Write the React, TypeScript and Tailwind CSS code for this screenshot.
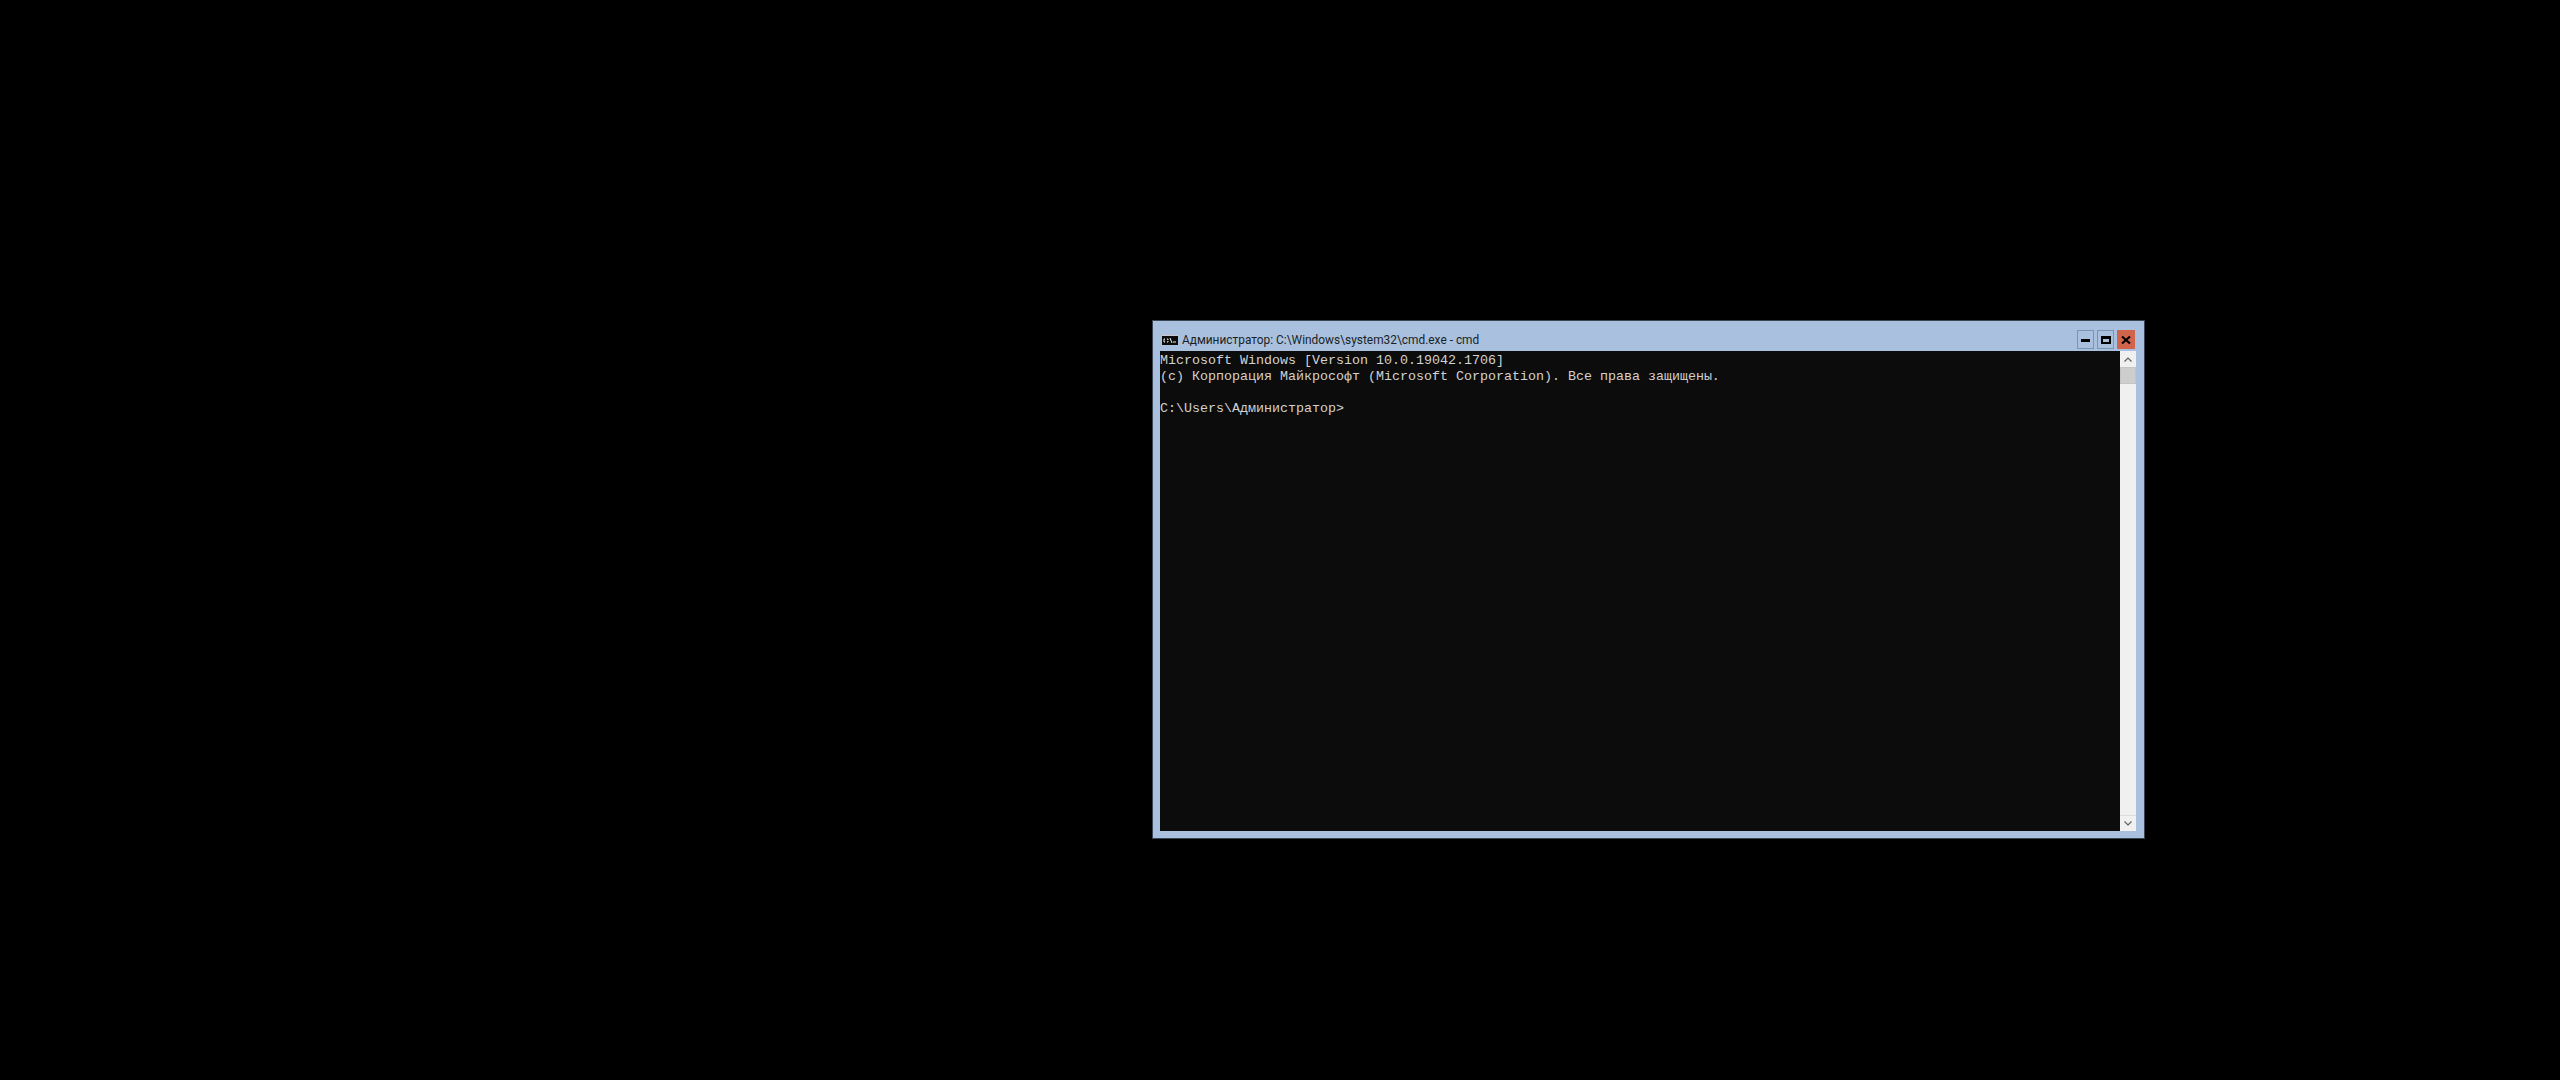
export default function App() {
  return (
    <div className="relative h-[1080px] w-[2560px] overflow-hidden bg-black">
      <div className="absolute left-[1152px] top-[320px] flex h-[519px] w-[993px] flex-col border border-[#3a4654] bg-[#a9c1de]">
        <div className="flex h-[30px] shrink-0 items-center pl-[9px] pr-[9px] pt-[7px]">
          <svg width="16" height="10" viewBox="0 0 16 10" className="mr-[4px] shrink-0">
            <rect width="16" height="10" fill="#0c0c0c" />
            <rect x="0" y="0" width="16" height="1" fill="#c9c9c9" />
            <path d="M3 4H2v3h1M5 4h1v1M5 7h1V6M8 3l2 5M11 7h3" stroke="#f2f2f2" strokeWidth="1" fill="none" />
          </svg>
          <span className="whitespace-nowrap font-['Roboto','Open_Sans',sans-serif] text-[11.9px] leading-[16px] text-[#1a1f26]">
            Администратор: C:\Windows\system32\cmd.exe - cmd
          </span>
          <div className="ml-auto flex items-center gap-[3px]">
            <div className="flex h-[19px] w-[17px] items-center justify-center border border-[#7d93b0]">
              <div className="mt-[2px] h-[3px] w-[9px] bg-black" />
            </div>
            <div className="flex h-[19px] w-[17px] items-center justify-center border border-[#7d93b0]">
              <div className="h-[8px] w-[10px] border-2 border-t-[3px] border-black" />
            </div>
            <div className="flex h-[19px] w-[18px] items-center justify-center bg-[#d1654c]">
              <svg width="10" height="10" viewBox="0 0 10 10">
                <path d="M1 1.500 9 8.500M9 1.500 1 8.500" stroke="#000" strokeWidth="2.200" />
              </svg>
            </div>
          </div>
        </div>
        <div className="mb-[7px] ml-[7px] mr-[8px] flex min-h-0 flex-1">
          <div className="flex-1 bg-[#0c0c0c] pt-[2px] font-['Liberation_Mono',monospace] text-[13.33px] leading-[16px] text-[#d2d2d2]">
            <div className="whitespace-pre">Microsoft Windows [Version 10.0.19042.1706]</div>
            <div className="whitespace-pre">(c) Корпорация Майкрософт (Microsoft Corporation). Все права защищены.</div>
            <div className="h-[16px]" />
            <div className="whitespace-pre">C:\Users\Администратор&gt;</div>
          </div>
          <div className="flex w-[16px] shrink-0 flex-col bg-[#f0f0f0]">
            <div className="flex h-[16px] items-center justify-center">
              <svg width="8" height="5" viewBox="0 0 8 5"><path d="M.5 4.500 4 1l3.500 3.500" stroke="#606060" strokeWidth="1.200" fill="none" /></svg>
            </div>
            <div className="h-[17px] border border-[#c4c4c4] bg-[#cdcdcd]" />
            <div className="flex-1" />
            <div className="flex h-[16px] items-center justify-center border-t border-[#dcdcdc]">
              <svg width="8" height="5" viewBox="0 0 8 5"><path d="M.5.500 4 4 7.500.500" stroke="#606060" strokeWidth="1.200" fill="none" /></svg>
            </div>
          </div>
        </div>
      </div>
    </div>
  );
}
